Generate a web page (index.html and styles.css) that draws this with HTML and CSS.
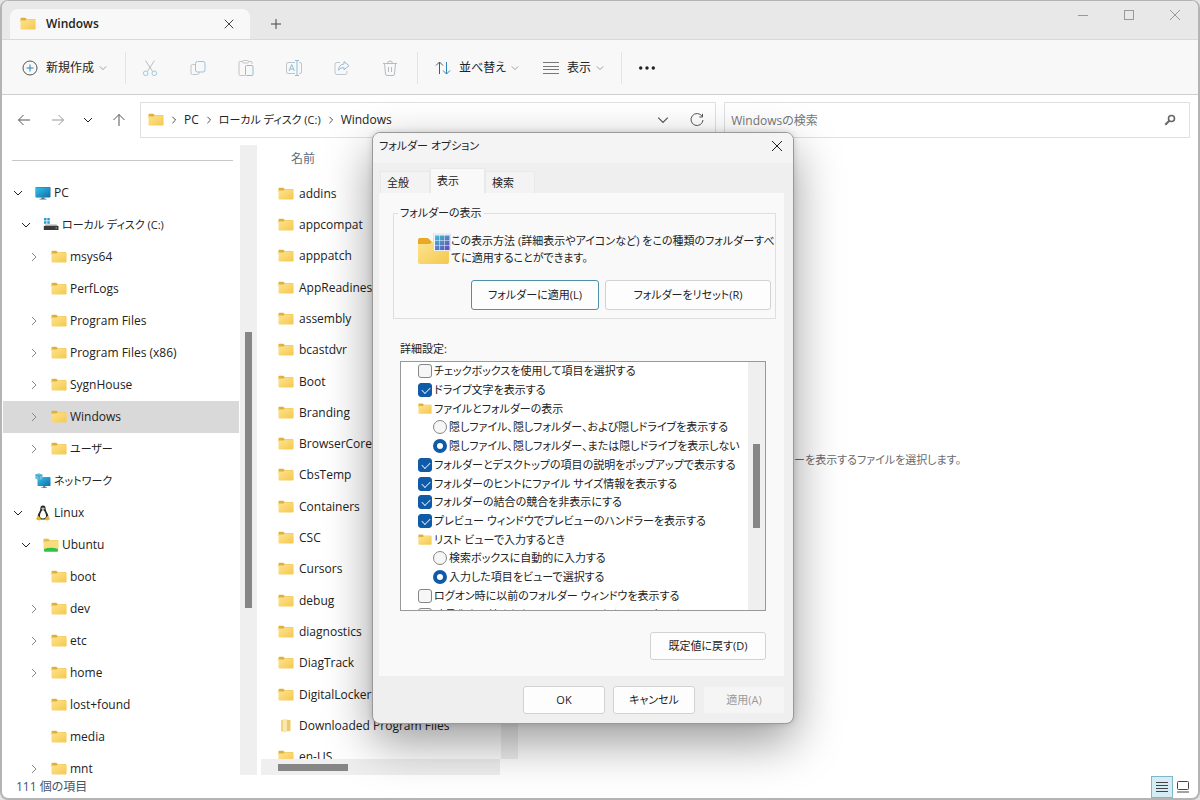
FILE: index.html
```html
<!DOCTYPE html>
<html lang="ja">
<head>
<meta charset="UTF-8">
<title>Windows</title>
<link rel="stylesheet" href="styles.css">
</head>
<body>

<!-- icon definitions -->
<svg class="defs" aria-hidden="true">
  <defs>
    <linearGradient id="gFolder" x1="0" y1="0" x2="1" y2="1">
      <stop offset="0" stop-color="#fde491"/><stop offset="1" stop-color="#f5c84e"/>
    </linearGradient>
    <linearGradient id="gScreen" x1="0" y1="0" x2="1" y2="1">
      <stop offset="0" stop-color="#35c3ea"/><stop offset="1" stop-color="#0f6fa8"/>
    </linearGradient>
    <linearGradient id="gGrid" x1="0" y1="0" x2="1" y2="1">
      <stop offset="0" stop-color="#3cc4d6"/><stop offset="1" stop-color="#6b44b0"/>
    </linearGradient>
    <symbol id="folder" viewBox="0 0 16 16">
      <path d="M.5 2.500q0-.8.800-.8h4l1.400 1.400H15v3H.5z" fill="#dfb13b"/>
      <path d="M.5 4.500h5l1.300-1.200H15q.6 0 .6.600v8.700q0 .8-.8.800H1.200q-.7 0-.7-.8z" fill="url(#gFolder)"/>
    </symbol>
    <symbol id="folder-tall" viewBox="0 0 16 16">
      <path d="M3 2h6v11.500H3z" fill="#f3d57b"/>
      <path d="M5 1l6 .8v11.500L5 14z" fill="#fbe7a6"/>
      <path d="M9 2h3.500v11H9z" fill="#ecca6c"/>
    </symbol>
    <symbol id="folder-linux" viewBox="0 0 16 16">
      <path d="M.5 2.500q0-.8.8-.8h4l1.400 1.400H15v3H.5z" fill="#e0bf4c"/>
      <path d="M.5 4.500h5l1.300-1.200H15.600v9H.5z" fill="#f9dc7c"/>
      <path d="M1 12q7-2.500 14 0v2q0 .8-1 .8H2q-1 0-1-.8z" fill="#2fc24a"/>
    </symbol>
    <symbol id="pc" viewBox="0 0 16 16">
      <rect x=".5" y="2" width="15" height="10.500" rx=".8" fill="#16779f"/>
      <rect x="1" y="2.500" width="14" height="9.500" rx=".4" fill="url(#gScreen)"/>
      <path d="M6.500 12.500h3v1.300h-3zM4.500 13.700h7v.9h-7z" fill="#3c7083"/>
    </symbol>
    <symbol id="drive" viewBox="0 0 16 16">
      <path d="M1 1h2.500v2.500H1zM4.300 1h2.500v2.500H4.300zM1 4.300h2.500v2.500H1zM4.300 4.300h2.500v2.500H4.300z" fill="#2b9bd0"/>
      <path d="M2.500 7.500h11L15.500 9.500H.8z" fill="#a9a9a9"/>
      <rect x=".8" y="9" width="14.700" height="4" rx=".5" fill="#3a3a3a"/>
      <path d="M12.500 10.500h1.500v1h-1.500z" fill="#6fe08a"/>
    </symbol>
    <symbol id="network" viewBox="0 0 16 16">
      <rect x="2.500" y="4" width="13" height="9" rx=".8" fill="url(#gScreen)"/>
      <path d="M8 13h2.500v1.500H8zM6.500 14.200h5.500v.9H6.500z" fill="#5f8a99"/>
      <path d="M.3 1.500 4 .3l3.500 1.500v4L4 7.500.3 5.500z" fill="#6cc0de"/>
      <path d="M.5 1.600 4 3l3.300-1.100M4 3v4.300" fill="none" stroke="#2b83aa" stroke-width=".6"/>
    </symbol>
    <symbol id="tux" viewBox="0 0 16 16">
      <path d="M8 .5c-2 0-2.700 1.300-2.600 3.200C5.400 6 3 8 2.700 11c-.1 1.500 1 3.300 2.500 3.500h5.600c1.500-.2 2.600-2 2.500-3.500C13 8 10.600 6 10.600 3.700 10.700 1.800 10 .5 8 .5z" fill="#252525"/>
      <path d="M8 5.200c-1 0-1.400.6-1.900 1.800C5.500 8.500 4.700 9.500 5 11.500c.2 1.300 1.300 2 3 2s2.800-.7 3-2c.3-2-.5-3-1.100-4.500C9.400 5.800 9 5.200 8 5.200z" fill="#fff"/>
      <circle cx="7.200" cy="3.200" r=".7" fill="#fff"/><circle cx="8.900" cy="3.200" r=".7" fill="#fff"/>
      <path d="M6.600 4.300 8 3.700l1.500.6L8 5.400zM1.300 13l2.200-2.300 2.800 3.500-1.300 1.300-3.500-.8zM14.700 13l-2.200-2.300-2.800 3.500 1.300 1.300 3.500-.8z" fill="#eab529"/>
    </symbol>
    <symbol id="down" viewBox="0 0 10 10"><path d="M1 3l4 4 4-4" fill="none" stroke="currentColor"/></symbol>
    <symbol id="right" viewBox="0 0 10 10"><path d="M3 1l4 4-4 4" fill="none" stroke="currentColor"/></symbol>
    <symbol id="close" viewBox="0 0 12 12"><path d="M1 1l10 10M11 1 1 11" fill="none" stroke="currentColor"/></symbol>
  </defs>
</svg>

<div class="window">

  <header class="titlebar">
    <div class="tab">
      <svg class="icon"><use href="#folder"/></svg>
      <span class="tab-title">Windows</span>
      <button class="plain" aria-label="タブを閉じる"><svg class="x-small" viewBox="-1 -1 14 14"><use href="#close" width="12" height="12"/></svg></button>
    </div>
    <button class="plain new-tab" aria-label="新しいタブ">
      <svg width="12" height="12" viewBox="0 0 12 12"><path d="M6 1v10M1 6h10" stroke="#444" fill="none"/></svg>
    </button>
    <div class="controls">
      <button class="plain" aria-label="最小化"><svg width="12" height="12" viewBox="0 0 12 12"><path d="M1 6.500h10" stroke="currentColor"/></svg></button>
      <button class="plain" aria-label="最大化"><svg width="12" height="12" viewBox="0 0 12 12"><rect x="1.500" y="1.500" width="9" height="9" fill="none" stroke="currentColor"/></svg></button>
      <button class="plain" aria-label="閉じる"><svg class="x-small"><use href="#close"/></svg></button>
    </div>
  </header>

  <div class="toolbar">
    <button class="tool tool-new">
      <svg class="icon" viewBox="0 0 16 16" fill="none"><circle cx="8" cy="8" r="7" stroke="#555"/><path d="M8 4.500v7M4.500 8h7" stroke="#2f83b5"/></svg>
      新規作成
      <svg class="caret"><use href="#down"/></svg>
    </button>
    <div class="tool-icons">
      <button class="plain" disabled aria-label="切り取り"><svg class="icon-large" viewBox="0 0 18 18" fill="none"><path d="M4.500 1.500l7 10.800M13.500 1.500l-7 10.800" stroke="#b9bfc3"/><circle cx="4.700" cy="14.300" r="2.300" stroke="#9cc8e0"/><circle cx="13.300" cy="14.300" r="2.300" stroke="#9cc8e0"/></svg></button>
      <button class="plain" disabled aria-label="コピー"><svg class="icon-large" viewBox="0 0 18 18" fill="none"><path d="M6 5.500H3.500q-1.500 0-1.500 1.500v7q0 1.500 1.500 1.500h5q1.500 0 1.500-1.500v-1" stroke="#c0c6ca"/><rect x="6.500" y="2.500" width="9.500" height="10.500" rx="2" stroke="#9fc3da"/></svg></button>
      <button class="plain" disabled aria-label="貼り付け"><svg class="icon-large" viewBox="0 0 18 18" fill="none"><path d="M6 2.500H3q-1 0-1 1v12q0 1 1 1h5M12 2.500h2q1 0 1 1V5" stroke="#c0c6ca"/><rect x="5.500" y="1.500" width="6" height="2.500" rx="1" stroke="#c0c6ca"/><rect x="8.500" y="6.500" width="7.500" height="10" rx="1" stroke="#8fbedb"/></svg></button>
      <button class="plain" disabled aria-label="名前の変更"><svg class="icon-large" viewBox="0 0 18 18" fill="none"><path d="M10 3.500H3q-1.500 0-1.500 1.500v8q0 1.500 1.500 1.500h7M14 3.500h1q1.500 0 1.500 1.500v8q0 1.500-1.500 1.500h-1" stroke="#c0c6ca"/><path d="M12 1.500v15M10 1.500h4M10 16.500h4M4 12l2.700-6.500L9.400 12M5 10h3.500" stroke="#8fbedb"/></svg></button>
      <button class="plain" disabled aria-label="共有"><svg class="icon-large" viewBox="0 0 18 18" fill="none"><path d="M7 3.500H4Q2 3.500 2 5.500v8q0 2 2 2h8q2 0 2-2v-1.500" stroke="#c0c6ca"/><path d="M11 2.500l5 4.200-5 4.200V8.500q-3.500-.2-5.500 2.700Q6 5.500 11 5z" stroke="#8fbedb"/></svg></button>
      <button class="plain" disabled aria-label="削除"><svg class="icon-large" viewBox="0 0 18 18" fill="none"><path d="M2 4.500h14M6.500 4.500q0-2.500 2.500-2.500t2.500 2.500M3.500 4.500l1 10.500q.1 1.500 1.500 1.500h6q1.400 0 1.500-1.500l1-10.500M7.500 8v5M10.500 8v5" stroke="#b5bbbf"/></svg></button>
    </div>
    <button class="tool tool-sort">
      <svg class="icon" viewBox="0 0 16 16" fill="none"><path d="M4.500 14V2M1 5.500 4.500 2 8 5.500" stroke="#555"/><path d="M11.500 2v12M8 10.500l3.500 3.500 3.500-3.500" stroke="#2f83b5"/></svg>
      並べ替え
      <svg class="caret"><use href="#down"/></svg>
    </button>
    <button class="tool tool-view">
      <svg class="icon" viewBox="0 0 16 16"><path d="M0 2.500h16M0 6.500h16M0 9.500h16M0 13.500h16" stroke="#777"/></svg>
      表示
      <svg class="caret"><use href="#down"/></svg>
    </button>
    <button class="plain tool-more" aria-label="もっと見る">
      <svg class="icon" viewBox="0 0 16 16" fill="#222"><circle cx="1.700" cy="8" r="1.700"/><circle cx="8" cy="8" r="1.700"/><circle cx="14.300" cy="8" r="1.700"/></svg>
    </button>
  </div>

  <div class="address-row">
    <div class="nav-buttons">
      <button class="plain back" aria-label="戻る"><svg width="14" height="14" viewBox="0 0 14 14"><path d="M13 7H1.500M6.500 2l-5 5 5 5" fill="none" stroke="#555"/></svg></button>
      <button class="plain" aria-label="進む"><svg width="14" height="14" viewBox="0 0 14 14"><path d="M1 7h11.500M7.500 2l5 5-5 5" fill="none" stroke="#999"/></svg></button>
      <button class="plain recent" aria-label="最近の場所"><svg class="chev"><use href="#down"/></svg></button>
      <button class="plain" aria-label="上へ"><svg width="14" height="14" viewBox="0 0 14 14"><path d="M7 13V1.500M1.500 7 7 1.500 12.500 7" fill="none" stroke="#555"/></svg></button>
    </div>
    <div class="address">
      <svg class="icon"><use href="#folder"/></svg>
      <svg class="crumb-sep"><use href="#right"/></svg>
      <a href="#">PC</a>
      <svg class="crumb-sep"><use href="#right"/></svg>
      <a href="#" class="kana">ローカル ディスク (C:)</a>
      <svg class="crumb-sep"><use href="#right"/></svg>
      <a href="#">Windows</a>
      <button class="plain history" aria-label="履歴"><svg width="12" height="12"><use href="#down"/></svg></button>
      <button class="plain" aria-label="最新の情報に更新"><svg width="14" height="14" viewBox="0 0 14 14"><path d="M12 3.200A6 6 0 1 0 13 7M12.500.8v3.200H9.300" fill="none" stroke="#555"/></svg></button>
    </div>
    <div class="search">
      <input type="search" placeholder="Windowsの検索" aria-label="Windowsの検索">
      <svg width="12" height="12" viewBox="0 0 12 12"><circle cx="7.500" cy="4.500" r="3" fill="none" stroke="#666" stroke-width="1.600"/><path d="M5.300 6.800 1.300 10.800" stroke="#666" stroke-width="2"/></svg>
    </div>
  </div>

  <main class="panes">

    <nav class="tree">
      <hr>
      <ul>
        <li><a href="#"><svg class="chev"><use href="#down"/></svg><svg class="icon"><use href="#pc"/></svg>PC</a></li>
        <li><a href="#" class="lv1 kana"><svg class="chev"><use href="#down"/></svg><svg class="icon"><use href="#drive"/></svg>ローカル ディスク (C:)</a></li>
        <li><a href="#" class="lv2"><svg class="chev closed"><use href="#right"/></svg><svg class="icon"><use href="#folder"/></svg>msys64</a></li>
        <li><a href="#" class="lv2"><svg class="chev"></svg><svg class="icon"><use href="#folder"/></svg>PerfLogs</a></li>
        <li><a href="#" class="lv2"><svg class="chev closed"><use href="#right"/></svg><svg class="icon"><use href="#folder"/></svg>Program Files</a></li>
        <li><a href="#" class="lv2"><svg class="chev closed"><use href="#right"/></svg><svg class="icon"><use href="#folder"/></svg>Program Files (x86)</a></li>
        <li><a href="#" class="lv2"><svg class="chev closed"><use href="#right"/></svg><svg class="icon"><use href="#folder"/></svg>SygnHouse</a></li>
        <li><a href="#" class="lv2 selected"><svg class="chev closed"><use href="#right"/></svg><svg class="icon"><use href="#folder"/></svg>Windows</a></li>
        <li><a href="#" class="lv2 kana"><svg class="chev closed"><use href="#right"/></svg><svg class="icon"><use href="#folder"/></svg>ユーザー</a></li>
        <li><a href="#" class="kana"><svg class="chev"></svg><svg class="icon"><use href="#network"/></svg>ネットワーク</a></li>
        <li><a href="#"><svg class="chev"><use href="#down"/></svg><svg class="icon"><use href="#tux"/></svg>Linux</a></li>
        <li><a href="#" class="lv1"><svg class="chev"><use href="#down"/></svg><svg class="icon"><use href="#folder-linux"/></svg>Ubuntu</a></li>
        <li><a href="#" class="lv2"><svg class="chev"></svg><svg class="icon"><use href="#folder"/></svg>boot</a></li>
        <li><a href="#" class="lv2"><svg class="chev closed"><use href="#right"/></svg><svg class="icon"><use href="#folder"/></svg>dev</a></li>
        <li><a href="#" class="lv2"><svg class="chev closed"><use href="#right"/></svg><svg class="icon"><use href="#folder"/></svg>etc</a></li>
        <li><a href="#" class="lv2"><svg class="chev closed"><use href="#right"/></svg><svg class="icon"><use href="#folder"/></svg>home</a></li>
        <li><a href="#" class="lv2"><svg class="chev"></svg><svg class="icon"><use href="#folder"/></svg>lost+found</a></li>
        <li><a href="#" class="lv2"><svg class="chev"></svg><svg class="icon"><use href="#folder"/></svg>media</a></li>
        <li><a href="#" class="lv2"><svg class="chev closed"><use href="#right"/></svg><svg class="icon"><use href="#folder"/></svg>mnt</a></li>
      </ul>
    </nav>
    <div class="scroll tree-scroll"><div class="thumb"></div></div>

    <section class="files">
      <div class="files-view">
        <div class="files-list">
          <div class="column-head">名前</div>
          <ul>
            <li><svg class="icon"><use href="#folder"/></svg>addins</li>
            <li><svg class="icon"><use href="#folder"/></svg>appcompat</li>
            <li><svg class="icon"><use href="#folder"/></svg>apppatch</li>
            <li><svg class="icon"><use href="#folder"/></svg>AppReadiness</li>
            <li><svg class="icon"><use href="#folder"/></svg>assembly</li>
            <li><svg class="icon"><use href="#folder"/></svg>bcastdvr</li>
            <li><svg class="icon"><use href="#folder"/></svg>Boot</li>
            <li><svg class="icon"><use href="#folder"/></svg>Branding</li>
            <li><svg class="icon"><use href="#folder"/></svg>BrowserCore</li>
            <li><svg class="icon"><use href="#folder"/></svg>CbsTemp</li>
            <li><svg class="icon"><use href="#folder"/></svg>Containers</li>
            <li><svg class="icon"><use href="#folder"/></svg>CSC</li>
            <li><svg class="icon"><use href="#folder"/></svg>Cursors</li>
            <li><svg class="icon"><use href="#folder"/></svg>debug</li>
            <li><svg class="icon"><use href="#folder"/></svg>diagnostics</li>
            <li><svg class="icon"><use href="#folder"/></svg>DiagTrack</li>
            <li><svg class="icon"><use href="#folder"/></svg>DigitalLocker</li>
            <li><svg class="icon"><use href="#folder-tall"/></svg>Downloaded Program Files</li>
            <li><svg class="icon"><use href="#folder"/></svg>en-US</li>
          </ul>
        </div>
        <div class="scroll"></div>
      </div>
      <div class="hscroll"><div class="hthumb"></div></div>
    </section>

    <section class="preview"><p>プレビューを表示するファイルを選択します。</p></section>
  </main>

  <footer class="status">
    <span>111 個の項目</span>
    <div class="view-switch">
      <button class="plain active" aria-label="詳細"><svg width="14" height="14" viewBox="0 0 14 14"><path d="M1 2.500h12M1 5.500h12M1 8.500h12M1 11.500h12" stroke="#444"/></svg></button>
      <button class="plain" aria-label="大アイコン"><svg width="14" height="14" viewBox="0 0 14 14"><rect x="1.500" y="1.500" width="11" height="8" rx="1" fill="none" stroke="#444"/><path d="M1 12h12" stroke="#444"/></svg></button>
    </div>
  </footer>
</div>

<form class="dialog" role="dialog" aria-labelledby="dialogTitle">
  <div class="dialog-title">
    <span id="dialogTitle">フォルダー オプション</span>
    <button type="button" class="plain" aria-label="閉じる"><svg class="x-small"><use href="#close"/></svg></button>
  </div>

  <div class="tabs" role="tablist">
    <button type="button" role="tab">全般</button>
    <button type="button" role="tab" class="current" aria-selected="true">表示</button>
    <button type="button" role="tab">検索</button>
  </div>

  <div class="panel">
    <fieldset>
      <legend>フォルダーの表示</legend>
      <div class="about">
        <svg width="33" height="34" viewBox="0 0 33 34">
          <path d="M0 8q0-2 2-2h7q1 0 2 1l3 3h17v8H0z" fill="#e9a924"/>
          <path d="M0 12h11q1.500 0 3-2h15q2 0 2 2v18q0 2-2 2H2q-2 0-2-2z" fill="url(#gFolder)"/>
          <rect x="15.500" y="2" width="17" height="17" fill="#f4f6fb" stroke="#c9d4e6" stroke-width=".6"/>
          <path d="M17 3.500h4.500V8H17zM22 3.500h4.500V8H22zM27 3.500h4.500V8H27zM17 8.500h4.500V13H17zM22 8.500h4.500V13H22zM27 8.500h4.500V13H27zM17 13.500h4.500V18H17zM22 13.500h4.500V18H22zM27 13.500h4.500V18H27z" fill="url(#gGrid)"/>
        </svg>
        <p>この表示方法 (詳細表示やアイコンなど) をこの種類のフォルダーすべ<br>てに適用することができます。</p>
      </div>
      <div class="row">
        <button type="button" class="btn apply focused">フォルダーに適用(L)</button>
        <button type="button" class="btn reset">フォルダーをリセット(R)</button>
      </div>
    </fieldset>

    <div class="advanced">
      <div class="label" id="advLabel">詳細設定:</div>
      <div class="listbox" role="group" aria-labelledby="advLabel">
        <ul>
          <li><label><input type="checkbox">チェックボックスを使用して項目を選択する</label></li>
          <li><label><input type="checkbox" checked>ドライブ文字を表示する</label></li>
          <li class="group"><svg class="icon-small"><use href="#folder"/></svg>ファイルとフォルダーの表示</li>
          <li class="sub"><label><input type="radio" name="hidden">隠しファイル、隠しフォルダー、および隠しドライブを表示する</label></li>
          <li class="sub"><label><input type="radio" name="hidden" checked>隠しファイル、隠しフォルダー、または隠しドライブを表示しない</label></li>
          <li><label><input type="checkbox" checked>フォルダーとデスクトップの項目の説明をポップアップで表示する</label></li>
          <li><label><input type="checkbox" checked>フォルダーのヒントにファイル サイズ情報を表示する</label></li>
          <li><label><input type="checkbox" checked>フォルダーの結合の競合を非表示にする</label></li>
          <li><label><input type="checkbox" checked>プレビュー ウィンドウでプレビューのハンドラーを表示する</label></li>
          <li class="group"><svg class="icon-small"><use href="#folder"/></svg>リスト ビューで入力するとき</li>
          <li class="sub"><label><input type="radio" name="typing">検索ボックスに自動的に入力する</label></li>
          <li class="sub"><label><input type="radio" name="typing" checked>入力した項目をビューで選択する</label></li>
          <li><label><input type="checkbox">ログオン時に以前のフォルダー ウィンドウを表示する</label></li>
          <li><label><input type="checkbox">暗号化や圧縮された NTFS ファイルをカラーで表示する</label></li>
        </ul>
        <div class="scroll list-scroll"><div class="thumb"></div></div>
      </div>
      <div class="row">
        <button type="button" class="btn defaults">既定値に戻す(D)</button>
      </div>
    </div>
  </div>

  <div class="dialog-buttons">
    <button type="button" class="btn">OK</button>
    <button type="button" class="btn">キャンセル</button>
    <button type="button" class="btn" disabled>適用(A)</button>
  </div>
</form>

</body>
</html>
```
FILE: styles.css
```css
* {
  box-sizing: border-box;
}

body {
  margin: 0;
  position: relative;
  background: #e4e4e4;
  color: #222;
  font-family: "Open Sans", "Noto Sans CJK JP", sans-serif;
  font-size: 12px;
  line-height: 16px;
  font-feature-settings: "palt";
}

ul, p {
  margin: 0;
  padding: 0;
  list-style: none;
}

a {
  color: inherit;
  text-decoration: none;
}

svg {
  flex: none;
  display: block;
}

button, input {
  font: inherit;
  font-feature-settings: inherit;
  color: inherit;
}

.defs {
  position: absolute;
  width: 0;
  height: 0;
}

/* icon sizes */
.icon { width: 16px; height: 16px; }
.icon-large { width: 18px; height: 18px; }
.icon-small { width: 14px; height: 14px; }
.x-small { width: 12px; height: 12px; }
.chev { width: 10px; height: 10px; }
.caret { width: 8px; height: 8px; color: #888; }
.chev.closed { color: #888; }

.kana {
  font-size: 11px;
}

.plain {
  border: 0;
  padding: 0;
  background: none;
  display: flex;
  align-items: center;
  justify-content: center;
}

/* explorer window */
.window {
  height: 100vh;
  display: flex;
  flex-direction: column;
  background: #fff;
  border: 2px solid #b4b4b4;
  border-top-width: 1px;
  border-radius: 8px;
  overflow: hidden;
}

.titlebar {
  height: 38px;
  flex: none;
  display: flex;
  align-items: flex-end;
  background: #e8e8e8;
}

.tab {
  width: 240px;
  height: 30px;
  margin-left: 8px;
  padding: 0 15px 0 10px;
  display: flex;
  align-items: center;
  gap: 10px;
  background: #f8f8f8;
  border-radius: 8px 8px 0 0;
}

.tab-title {
  flex: 1;
  font-weight: 600;
}

.new-tab {
  width: 52px;
  height: 30px;
}

.controls {
  margin-left: auto;
  align-self: flex-start;
  display: flex;
  color: #999;
}

.controls .plain {
  width: 46px;
  height: 28px;
}

.toolbar {
  height: 56px;
  flex: none;
  padding-top: 1px;
  display: flex;
  align-items: center;
  background: #f8f8f8;
  border-top: 1px solid #d9d9d9;
  border-bottom: 1px solid #cfcfcf;
}

.tool {
  height: 32px;
  border: 0;
  border-right: 1px solid #e3e3e3;
  background: none;
  padding: 0;
  display: flex;
  align-items: center;
  gap: 8px;
}

.tool .caret {
  margin-left: -3px;
}

.tool-new {
  width: 124px;
  padding-left: 20px;
}

.tool-icons {
  width: 292px;
  padding-right: 3px;
  height: 32px;
  display: flex;
  border-right: 1px solid #e3e3e3;
}

.tool-icons .plain {
  flex: 1;
}

.tool-sort {
  border: 0;
  padding-left: 17px;
}

.tool-view {
  padding: 0 17px 0 24px;
}

.tool-more {
  width: 50px;
  height: 32px;
}

.address-row {
  height: 50px;
  flex: none;
  padding: 7px 8px 0 8px;
  display: flex;
}

.nav-buttons {
  width: 130px;
  height: 36px;
  display: flex;
}

.nav-buttons .plain {
  width: 41px;
}

.nav-buttons .back {
  width: 27px;
}

.nav-buttons .recent {
  width: 20px;
}

.address {
  flex: 577;
  height: 36px;
  padding: 0 9px 0 7px;
  display: flex;
  align-items: center;
  gap: 6px;
  border: 1px solid #e0e0e0;
}

.crumb-sep {
  width: 8px;
  height: 8px;
}

.address .plain {
  width: 18px;
  height: 24px;
  color: #555;
}

.address .history {
  margin: 0 10px 0 auto;
}

.search {
  flex: 466;
  height: 36px;
  margin-left: 8px;
  padding-right: 13px;
  display: flex;
  align-items: center;
  border: 1px solid #e0e0e0;
}

.search input {
  flex: 1;
  min-width: 0;
  height: 30px;
  border: 0;
  padding: 0 6px;
  background: none;
  outline: none;
}

.search input::placeholder {
  color: #777;
}

/* panes */
.panes {
  flex: 1;
  min-height: 0;
  display: flex;
}

.tree {
  width: 238px;
  padding: 0 1px;
  overflow: hidden;
}

.tree hr {
  margin: 15px 6px 16px 9px;
  border: 0;
  border-top: 1px solid #c8c8c8;
}

.tree a {
  height: 32px;
  padding-left: 10px;
  display: flex;
  align-items: center;
  white-space: nowrap;
}

.tree a.lv1 { padding-left: 18px; }
.tree a.lv2 { padding-left: 26px; }

.tree a.selected {
  background: #d9d9d9;
}

.tree .icon {
  margin: 0 3px 0 12px;
}

.scroll {
  width: 17px;
  flex: none;
  background: #efefef;
  display: flex;
  justify-content: center;
}

.thumb {
  width: 7px;
  background: #868686;
}

.tree-scroll .thumb {
  height: 276px;
  margin-top: 187px;
}

.files {
  width: 257px;
  margin-left: 4px;
  display: flex;
  flex-direction: column;
}

.files-view {
  flex: 1;
  min-height: 0;
  display: flex;
}

.files-list {
  flex: 1;
  min-width: 0;
  overflow: hidden;
}

.column-head {
  height: 33px;
  padding: 6px 0 0 30px;
  color: #5c6b7d;
}

/* 19 rows */
.files-list ul {
  height: 595px;
  padding-left: 17px;
  display: grid;
  grid-auto-rows: 1fr;
}

.files-list li {
  display: flex;
  align-items: center;
  gap: 5px;
  white-space: nowrap;
}

.hscroll {
  height: 16px;
  width: 239px;
  padding: 5px 17px;
  background: #efefef;
}

.hthumb {
  width: 70px;
  height: 7px;
  background: #868686;
}

.preview {
  flex: 1;
  display: flex;
  align-items: center;
  justify-content: center;
  color: #6a6a6a;
  font-size: 11px;
}

.status {
  height: 23px;
  flex: none;
  padding: 0 5px 0 14px;
  display: flex;
  align-items: center;
  justify-content: space-between;
  color: #44546a;
}

.view-switch {
  display: flex;
}

.view-switch .plain {
  width: 20px;
  height: 22px;
}

.view-switch .active {
  width: 22px;
  background: #d5ecf5;
  border: 1px solid #7fb6c9;
}

/* folder options dialog */
.dialog {
  position: absolute;
  left: 372px;
  top: 132px;
  width: 422px;
  background: #efefef;
  border: 1px solid #999;
  border-radius: 8px;
  overflow: hidden;
  box-shadow: 0 18px 48px rgba(0, 0, 0, 0.4), 0 0 6px rgba(0, 0, 0, 0.15);
  font-size: 11px;
}

.dialog-title {
  height: 30px;
  padding: 0 10px 4px 6px;
  display: flex;
  align-items: center;
  justify-content: space-between;
  background: #f4f4f4;
}

.tabs {
  height: 30px;
  padding-left: 7px;
  display: flex;
  align-items: flex-end;
}

.tabs button {
  width: 50px;
  height: 22px;
  padding: 0 0 0 6px;
  text-align: left;
  background: #f3f3f3;
  border: 1px solid #e9e9e9;
  border-bottom: 0;
}

.tabs button.current {
  width: 55px;
  height: 25px;
  background: #f9f9f9;
}

.panel {
  margin: 0 9px 0 6px;
  padding: 12px 8px 16px 14px;
  background: #f9f9f9;
}

fieldset {
  margin: 0;
  min-width: 0;
  padding: 11px 4px 8px 24px;
  border: 1px solid #dfdfdf;
}

legend {
  margin-left: -20px;
  padding: 0 2px;
}

.about {
  display: flex;
  line-height: 17px;
  white-space: nowrap;
}

.row {
  display: flex;
  justify-content: flex-end;
  gap: 6px;
  margin-top: 14px;
}

.btn {
  height: 28px;
  padding: 0;
  background: #fdfdfd;
  border: 1px solid #d2d2d2;
  border-radius: 3px;
}

.btn:disabled {
  color: #9a9a9a;
  background: #f5f5f5;
  border-color: #f0f0f0;
}

fieldset .btn {
  height: 30px;
}

.apply { width: 128px; }
.reset { width: 166px; }
.defaults { width: 116px; }

.btn.focused {
  border-color: #4f8fae;
}

.advanced {
  margin: 22px 10px 0 7px;
}

.advanced .row {
  margin-top: 21px;
}

.listbox {
  height: 250px;
  margin-top: 4px;
  display: flex;
  background: #fff;
  border: 1px solid #999;
  overflow: hidden;
}

/* 14 rows, the last one is cut by the frame */
.listbox ul {
  flex: 1;
  height: 262px;
  padding-left: 17px;
  display: grid;
  grid-auto-rows: 1fr;
}

.listbox li, .listbox label {
  display: flex;
  align-items: center;
  white-space: nowrap;
}

.listbox .sub {
  padding-left: 15px;
}

.listbox .group {
  gap: 2px;
}

.listbox input {
  appearance: none;
  flex: none;
  width: 14px;
  height: 14px;
  margin: 0 2px 0 0;
  background: #f6f6f6;
  border: 1px solid #868686;
  border-radius: 3px;
}

.listbox input[type="radio"] {
  border-radius: 50%;
}

.listbox input:checked {
  background: #0f5ba8;
  border-color: #0f5ba8;
}

.listbox input[type="checkbox"]:checked::after {
  content: "";
  display: block;
  width: 7px;
  height: 4px;
  margin: 3px 0 0 3px;
  border: solid #cfe2f5;
  border-width: 0 0 1px 1px;
  transform: rotate(-45deg);
}

.listbox input[type="radio"]:checked {
  background: #fff;
  border-width: 4px;
}

.list-scroll .thumb {
  height: 84px;
  margin-top: 82px;
}

.dialog-buttons {
  padding: 10px 8px 9px;
  display: flex;
  justify-content: flex-end;
  gap: 8px;
}

.dialog-buttons .btn {
  width: 82px;
}
```
